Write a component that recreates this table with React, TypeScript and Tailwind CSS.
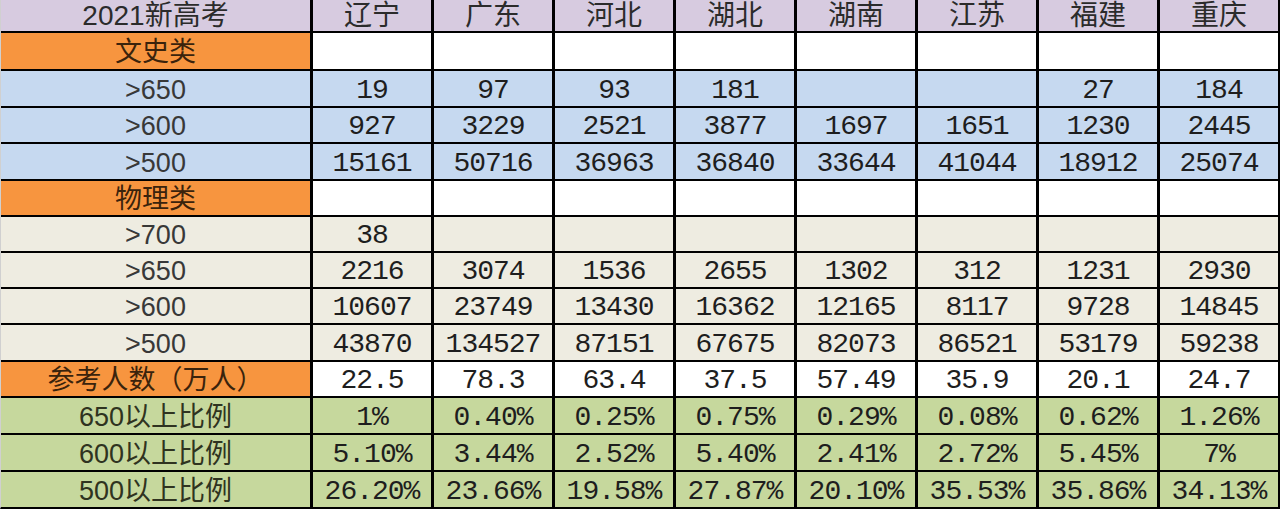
const provinces = ["辽宁", "广东", "河北", "湖北", "湖南", "江苏", "福建", "重庆"];

type Kind = "cat" | "blue" | "beige" | "total" | "green";

const rows: { kind: Kind; label: string; values: string[]; h: string }[] = [
  { kind: "cat", label: "文史类", values: ["", "", "", "", "", "", "", ""], h: "h-[36px]" },
  { kind: "blue", label: ">650", values: ["19", "97", "93", "181", "", "", "27", "184"], h: "h-[35px]" },
  { kind: "blue", label: ">600", values: ["927", "3229", "2521", "3877", "1697", "1651", "1230", "2445"], h: "h-[34px]" },
  { kind: "blue", label: ">500", values: ["15161", "50716", "36963", "36840", "33644", "41044", "18912", "25074"], h: "h-[35px]" },
  { kind: "cat", label: "物理类", values: ["", "", "", "", "", "", "", ""], h: "h-[34px]" },
  { kind: "beige", label: ">700", values: ["38", "", "", "", "", "", "", ""], h: "h-[34px]" },
  { kind: "beige", label: ">650", values: ["2216", "3074", "1536", "2655", "1302", "312", "1231", "2930"], h: "h-[34px]" },
  { kind: "beige", label: ">600", values: ["10607", "23749", "13430", "16362", "12165", "8117", "9728", "14845"], h: "h-[34px]" },
  { kind: "beige", label: ">500", values: ["43870", "134527", "87151", "67675", "82073", "86521", "53179", "59238"], h: "h-[35px]" },
  { kind: "total", label: "参考人数（万人）", values: ["22.5", "78.3", "63.4", "37.5", "57.49", "35.9", "20.1", "24.7"], h: "h-[34px]" },
  { kind: "green", label: "650以上比例", values: ["1%", "0.40%", "0.25%", "0.75%", "0.29%", "0.08%", "0.62%", "1.26%"], h: "h-[35px]" },
  { kind: "green", label: "600以上比例", values: ["5.10%", "3.44%", "2.52%", "5.40%", "2.41%", "2.72%", "5.45%", "7%"], h: "h-[35px]" },
  { kind: "green", label: "500以上比例", values: ["26.20%", "23.66%", "19.58%", "27.87%", "20.10%", "35.53%", "35.86%", "34.13%"], h: "h-[35px]" },
];

const labelBg: Record<Kind, string> = {
  cat: "bg-[#f7953f] text-[#3a230c]",
  blue: "bg-[#c6d9f0] text-[#383838]",
  beige: "bg-[#eeece1] text-[#383838]",
  total: "bg-[#f7953f] text-[#3a230c]",
  green: "bg-[#c6d89d] text-[#2f3320]",
};

const cellBg: Record<Kind, string> = {
  cat: "bg-white",
  blue: "bg-[#c6d9f0]",
  beige: "bg-[#eeece1]",
  total: "bg-white",
  green: "bg-[#c6d89d]",
};

const sans = "font-['Liberation_Sans','Noto_Sans_CJK_SC',sans-serif]";
const mono = "font-['Liberation_Mono','Noto_Sans_CJK_SC',monospace]";

export default function App() {
  return (
    <div className="h-[512px] w-[1280px] overflow-hidden bg-white">
      <div className="flex w-[1280px] flex-col gap-y-[2px] border-b-2 border-l border-r-[3px] border-b-black border-l-[#d0d0d0] border-r-black bg-black">
        <div className="grid h-[31px] grid-cols-[309px_repeat(8,118px)] gap-x-[3px]">
          <div className={`flex items-center justify-center bg-[#d7cbe0] text-[28px] leading-none text-[#2b2b2b] ${sans}`}>
            2021新高考
          </div>
          {provinces.map((p) => (
            <div
              key={p}
              className={`flex items-center justify-center bg-[#d7cbe0] text-[28px] leading-none text-[#2b2b2b] ${sans}`}
            >
              {p}
            </div>
          ))}
        </div>

        {rows.map((row, i) => (
          <div key={i} className={`grid grid-cols-[309px_repeat(8,118px)] gap-x-[3px] ${row.h}`}>
            <div className={`flex items-center justify-center pt-[3px] text-[27px] leading-none ${labelBg[row.kind]} ${sans}`}>
              {row.label}
            </div>
            {row.values.map((v, j) => (
              <div
                key={j}
                className={`flex items-center justify-center pt-[4px] text-[28px] leading-none tracking-[-1px] text-[#1e1e1e] ${cellBg[row.kind]} ${mono}`}
              >
                {v}
              </div>
            ))}
          </div>
        ))}
      </div>
    </div>
  );
}
